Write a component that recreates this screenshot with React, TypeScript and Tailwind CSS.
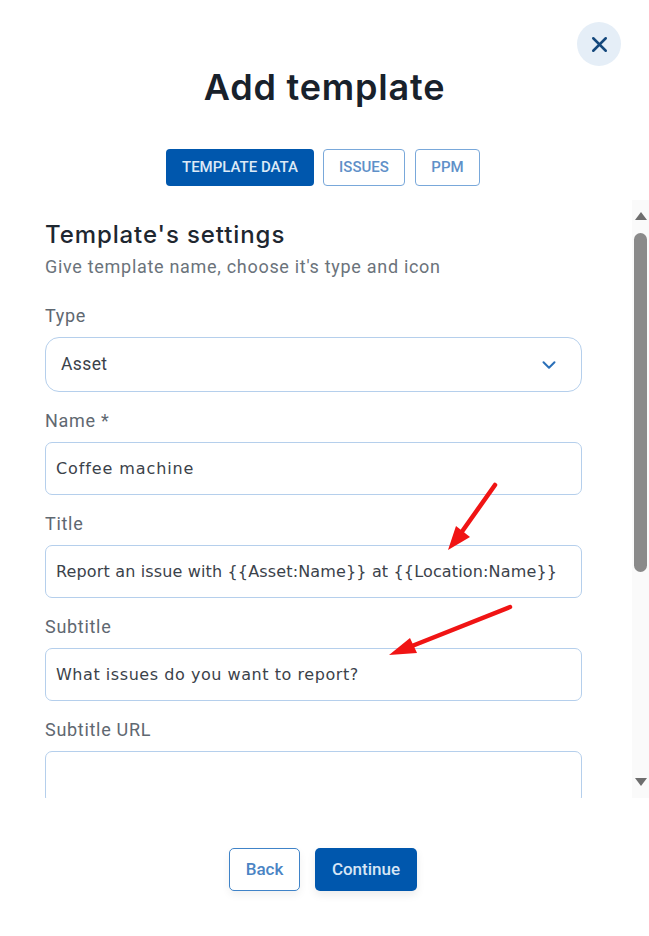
import React from 'react';
import { X, ChevronDown } from 'lucide-react';

const Field = ({ label, value, spacing = '' }: { label: string; value?: string; spacing?: string }) => (
  <div className="mt-[15px]">
    <div className="h-[28px] mb-[7px] font-['Roboto',sans-serif] text-[18px] tracking-[0.7px] leading-[28px] text-[#5f6871]">{label}</div>
    <div className={`h-[53px] px-[10px] flex items-center rounded-[7px] border border-[#b5cfec] bg-white font-['DejaVu_Sans',sans-serif] text-[16px] text-[#3b424a] whitespace-nowrap ${spacing}`}>
      {value}
    </div>
  </div>
);

export default function App() {
  return (
    <div className="relative w-[649px] h-[936px] bg-white overflow-hidden flex flex-col font-['Inter',sans-serif]">
      {/* header */}
      <div className="flex justify-end pt-[22px] pr-[28px]">
        <button className="w-[44px] h-[44px] rounded-full bg-[#e5eef7] flex items-center justify-center text-[#14487c]">
          <X size={25} strokeWidth={2.4} />
        </button>
      </div>
      <h1 className="mt-[-1px] h-[44px] text-center font-['Inter',sans-serif] font-semibold text-[36px] tracking-[0.8px] leading-[44px] text-[#18212b]">Add template</h1>

      {/* tabs */}
      <div className="mt-[40px] pl-[166px] flex font-['Roboto',sans-serif] font-medium text-[15px]">
        <div className="w-[148px] h-[37px] flex items-center justify-center rounded-[4px] bg-[#0057ad] text-[#dce9f6]">TEMPLATE DATA</div>
        <div className="ml-[9px] w-[82px] h-[37px] flex items-center justify-center rounded-[4px] border border-[#79a8da] text-[#5f90c8]">ISSUES</div>
        <div className="ml-[10px] w-[65px] h-[37px] flex items-center justify-center rounded-[4px] border border-[#79a8da] text-[#5f90c8]">PPM</div>
      </div>

      {/* scroll area */}
      <div className="mt-[14px] h-[598px] flex overflow-hidden">
        <div className="w-[632px] shrink-0 pl-[45px] pr-[50px] pt-[20px]">
          <div className="h-[30px] font-['Inter',sans-serif] font-medium text-[24px] tracking-[0.9px] leading-[30px] text-[#1e2730]">Template's settings</div>
          <div className="mt-[5px] h-[24px] font-['Roboto',sans-serif] text-[18px] tracking-[0.7px] leading-[24px] text-[#6b737b] whitespace-nowrap">Give template name, choose it's type and icon</div>

          <div className="mt-[23px]">
            <div className="h-[28px] mb-[7px] font-['Roboto',sans-serif] text-[18px] tracking-[0.7px] leading-[28px] text-[#5f6871]">Type</div>
            <div className="h-[55px] pl-[15px] pr-[21px] flex items-center justify-between rounded-[14px] border border-[#b5cfec] font-['Roboto',sans-serif] text-[17.5px] tracking-[0.4px] text-[#3b424a]">
              Asset
              <ChevronDown size={22} strokeWidth={2.2} className="text-[#2a6fb8]" />
            </div>
          </div>
          <Field label="Name *" value="Coffee machine" spacing="tracking-[0.9px]" />
          <Field label="Title" value="Report an issue with {{Asset:Name}} at {{Location:Name}}" spacing="tracking-[0.15px]" />
          <Field label="Subtitle" value="What issues do you want to report?" spacing="tracking-[0.55px]" />
          <Field label="Subtitle URL" />
        </div>

        {/* scrollbar */}
        <div className="w-[17px] bg-[#fafafa] flex flex-col items-center">
          <svg width="14" height="10" viewBox="0 0 14 10" className="mt-[11px] shrink-0"><path d="M7 1 L13 9 H1 Z" fill="#6e6e6e" /></svg>
          <div className="mt-[12px] w-[13px] h-[339px] rounded-full bg-[#8a8a8a]" />
          <svg width="14" height="10" viewBox="0 0 14 10" className="mt-[205px] shrink-0"><path d="M1 1 H13 L7 9 Z" fill="#6e6e6e" /></svg>
        </div>
      </div>

      {/* footer */}
      <div className="mt-[50px] pl-[229px] flex font-['Roboto',sans-serif] font-medium text-[17px]">
        <button className="w-[71px] h-[43px] rounded-[5px] border border-[#3f83c8] text-[#4a84c4] bg-white shadow-[0_4px_8px_rgba(0,0,0,0.06)]">Back</button>
        <button className="ml-[15px] w-[102px] h-[43px] rounded-[5px] bg-[#0057ad] text-[#d6e5f5] shadow-[0_4px_8px_rgba(0,0,0,0.08)]">Continue</button>
      </div>

      {/* annotation arrows */}
      <svg className="absolute inset-0 pointer-events-none" width="649" height="936" viewBox="0 0 649 936">
        <path d="M495 485 L461 533" stroke="#f01414" strokeWidth="4.5" strokeLinecap="round" fill="none" />
        <path d="M448 550 L456 526 L470 537 Z" fill="#f01414" />
        <path d="M510 607 L412 646" stroke="#f01414" strokeWidth="4.5" strokeLinecap="round" fill="none" />
        <path d="M389 655 L410 638 L417 653 Z" fill="#f01414" />
      </svg>
    </div>
  );
}
